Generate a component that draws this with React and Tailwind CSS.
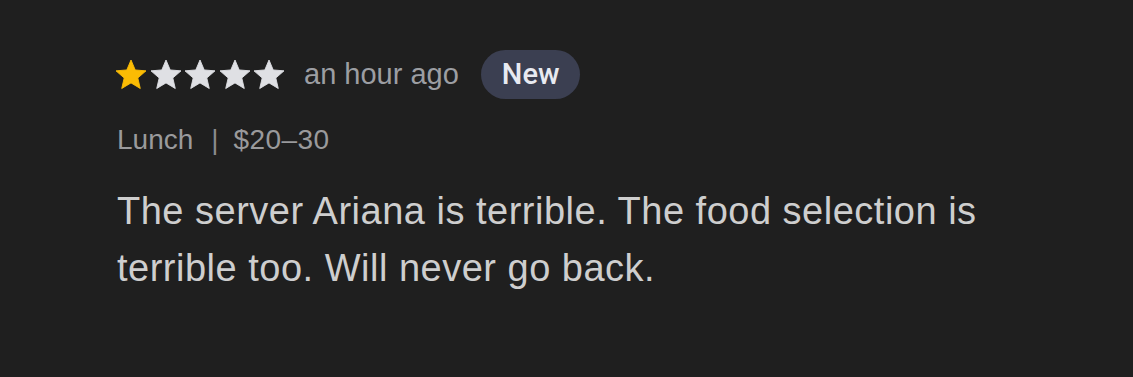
import React from "react";

const STAR = "M12 17.27L18.18 21l-1.64-7.03L22 9.24l-7.19-.61L12 2 9.19 8.63 2 9.24l5.46 4.73L5.82 21z";

function Star({ color }) {
  return (
    <svg viewBox="2 2 20 19" width="30" height="28.5" className="block shrink-0 overflow-visible">
      <path d={STAR} fill={color} strokeLinejoin="round" stroke={color} strokeWidth="0.6" />
    </svg>
  );
}

export default function App() {
  return (
    <div
      className="w-full h-[377px] bg-[#1f1f1f] pl-[116px] pt-[50px]"
      style={{ fontFamily: '"Liberation Sans", Arial, sans-serif' }}
    >
      <div className="flex items-center h-[49px]">
        <div className="flex items-center gap-[4.5px]">
          <Star color="#fbbc04" />
          <Star color="#dfe0e4" />
          <Star color="#dfe0e4" />
          <Star color="#dfe0e4" />
          <Star color="#dfe0e4" />
        </div>
        <span className="ml-[20px] text-[29px] text-[#9c9ea3]">an hour ago</span>
        <span
          className="ml-[22px] h-[49px] px-[21px] rounded-full bg-[#3b3f51] text-[#e8eaf1] text-[29px] font-medium flex items-center"
          style={{ fontFamily: 'Roboto, "Liberation Sans", sans-serif' }}
        >
          New
        </span>
      </div>
      <div className="mt-[27px] flex items-center text-[28px] leading-[28px] text-[#9a9a9c] pl-[1px]">
        <span>Lunch</span>
        <span className="ml-[18px] mr-[15px] text-[#8a8a8c]">|</span>
        <span className="tracking-[0.4px]">$20–30</span>
      </div>
      <p className="mt-[29px] w-[900px] pl-[1px] text-[38px] leading-[57px] tracking-[0.5px] text-[#cecece]">
        The server Ariana is terrible. The food selection is terrible too. Will never go back.
      </p>
    </div>
  );
}
